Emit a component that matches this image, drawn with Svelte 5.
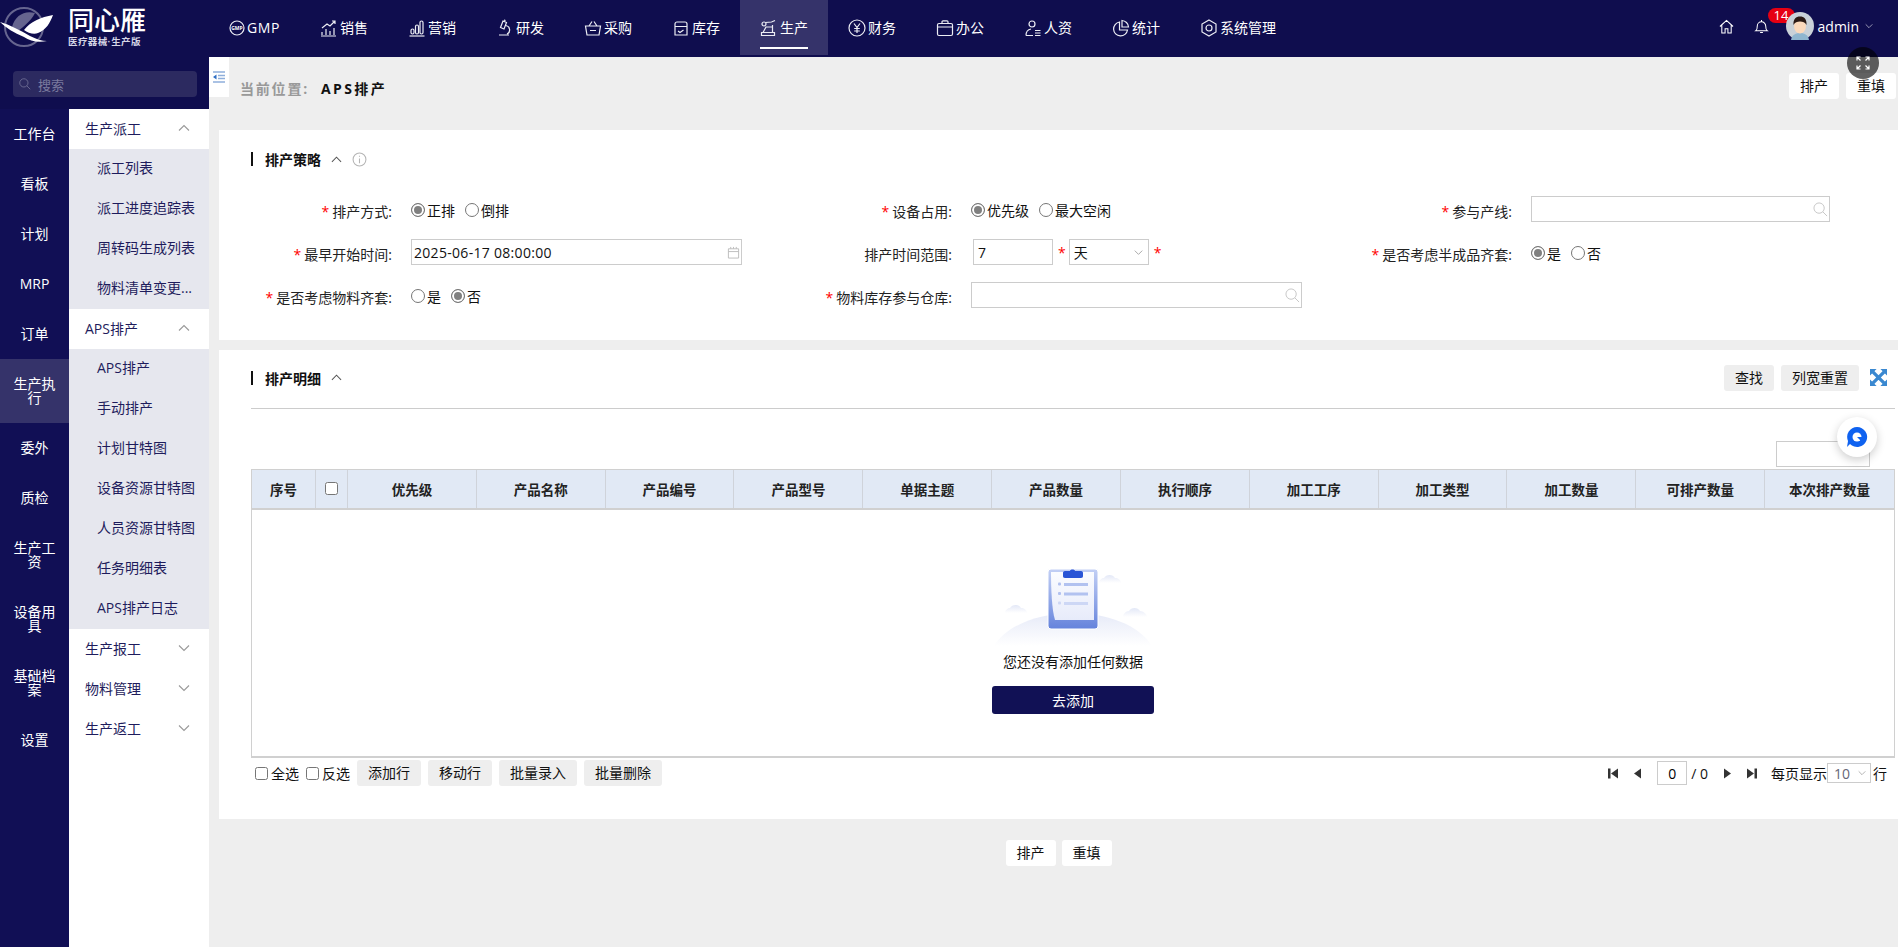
<script>
  const navItems = [
    { key: 'gmp', label: 'GMP' },
    { key: 'sale', label: '销售' },
    { key: 'market', label: '营销' },
    { key: 'dev', label: '研发' },
    { key: 'buy', label: '采购' },
    { key: 'stock', label: '库存' },
    { key: 'prod', label: '生产', active: true },
    { key: 'money', label: '财务' },
    { key: 'office', label: '办公' },
    { key: 'hr', label: '人资' },
    { key: 'stat', label: '统计' },
    { key: 'sys', label: '系统管理' }
  ];

  const railItems = ['工作台', '看板', '计划', 'MRP', '订单', '生产执行', '委外', '质检', '生产工资', '设备用具', '基础档案', '设置'];

  const groups = [
    { title: '生产派工', open: true, items: ['派工列表', '派工进度追踪表', '周转码生成列表', '物料清单变更...'] },
    { title: 'APS排产', open: true, items: ['APS排产', '手动排产', '计划甘特图', '设备资源甘特图', '人员资源甘特图', '任务明细表', 'APS排产日志'] },
    { title: '生产报工', open: false, items: [] },
    { title: '物料管理', open: false, items: [] },
    { title: '生产返工', open: false, items: [] }
  ];

  const columns = ['优先级', '产品名称', '产品编号', '产品型号', '单据主题', '产品数量', '执行顺序', '加工工序', '加工类型', '加工数量', '可排产数量', '本次排产数量'];
</script>

{#snippet navIcon(name)}
  <svg class="nav-icon" viewBox="0 0 18 18">
    {#if name === 'gmp'}
      <circle cx="8" cy="9" r="7" />
      <text x="8" y="11" class="gmp-mark">GMP</text>
    {:else if name === 'sale'}
      <path d="M2 16v-3M6 16v-6M10 16v-4M14 16V9M1 17h15M2 9l5-4 3 2 5-5M12 2h3v3" />
    {:else if name === 'market'}
      <rect x="3" y="10" width="3" height="5" rx="1.5" /><rect x="7.5" y="6" width="3" height="9" rx="1.5" /><rect x="12" y="2" width="3" height="13" rx="1.5" /><path d="M1.5 17h15" />
    {:else if name === 'dev'}
      <path d="M7 2l3.500 1.500L8 10 4.500 8.500zM10 6.500a4.500 4.500 0 0 1 1 8.500M3 16h10M8 1l1.500 .6" />
    {:else if name === 'buy'}
      <path d="M1.500 7h15l-1.500 9H3zM5 7l3-4.500M13 7l-3-4.500M6 11.500h6" />
    {:else if name === 'stock'}
      <path d="M3 5a2 2 0 0 1 2-2h8a2 2 0 0 1 2 2v11H3zM3 7.500h12M6 12l2 1.500 3.500-2.500" />
    {:else if name === 'prod'}
      <path d="M1.500 16.500h13v-3h-13zM3 13.500l3-5.500M5.500 3.500l6-.5 3.500-1.500M5.500 8h7v5.500M12.500 8V6" /><circle cx="4" cy="5" r="2" />
    {:else if name === 'money'}
      <circle cx="9" cy="9" r="8" /><path d="M6 4.500l3 4 3-4M9 8.500v5.500M6.200 9.500h5.600M6.200 12h5.600" />
    {:else if name === 'office'}
      <rect x="1.500" y="4.500" width="15" height="12" rx="1.500" /><path d="M6 4.500V2.800a1 1 0 0 1 1-1h4a1 1 0 0 1 1 1v1.700M1.500 8h15" />
    {:else if name === 'hr'}
      <circle cx="8" cy="5" r="3" /><path d="M2 16.500c0-3.500 2-6 5-6.500M2 16.500h7M11 11.500h5.500M11 14h5.500M11 16.500h5.500" />
    {:else if name === 'stat'}
      <path d="M7.500 3a7 7 0 1 0 8 8H7.500zM10 1.500a7 7 0 0 1 6.500 6.500H10z" />
    {:else}
      <path d="M9 1l7 4v8l-7 4-7-4V5z" /><circle cx="9" cy="9" r="3" />
    {/if}
  </svg>
{/snippet}

{#snippet chevron(up, size = 11)}
  <svg class="chev" width={size} height={size} viewBox="0 0 12 12">
    <path d={up ? 'M1 8.500l5-5 5 5' : 'M1 3.500l5 5 5-5'} />
  </svg>
{/snippet}

{#snippet lens()}
  <svg class="lens" viewBox="0 0 16 16"><circle cx="6.500" cy="6.500" r="5.500" /><path d="M10.500 10.500l4.500 4.500" /></svg>
{/snippet}

{#snippet radio(label, on = false)}
  <label class="radio">
    <input type="radio" checked={on} disabled />
    <span>{label}</span>
  </label>
{/snippet}

<div class="page">
  <header class="top">
    <div class="logo">
      <svg class="bird" viewBox="0 0 56 50">
        <circle cx="24" cy="27" r="19" class="ring" />
        <path class="wing-back" d="M12 27C15 15 25 10 35 13 31 21 23 27 18 31z" />
        <path class="wing-front" d="M53 15C41 17 30 22 24 30 28 33 34 35 38 33 46 30 50 23 53 15z" />
        <path class="wing-front" d="M0 22c10 3 20 8 30 14 6 3 12 5 17 5-9 2-17 0-23-4C14 33 6 28 0 22z" />
      </svg>
      <div class="logo-text">
        <div class="logo-name">同心雁</div>
        <div class="logo-sub">医疗器械·生产版</div>
      </div>
    </div>

    <nav class="menu">
      {#each navItems as item}
        <div class="menu-item" class:active={item.active}>
          {@render navIcon(item.key)}
          <span>{item.label}</span>
        </div>
      {/each}
    </nav>

    <div class="user">
      <svg class="tool" viewBox="0 0 16 16"><path d="M1 8l7-6.500L15 8M3 6.500V15h3.500v-4.500h3V15H13V6.500" /></svg>
      <div class="bell">
        <svg class="tool" viewBox="0 0 16 16"><path d="M2 12.500c1.500-1 1.500-2.500 1.500-5a4.500 4.500 0 0 1 9 0c0 2.500 0 4 1.500 5zM6.500 14.500h3M8 1v1.500" /></svg>
        <span class="badge">14</span>
      </div>
      <svg class="avatar" viewBox="0 0 28 28">
        <circle cx="14" cy="14" r="14" fill="#c9d1d8" />
        <path d="M5 28c1-5 4-7 9-7s8 2 9 7z" fill="#8fb6cf" />
        <ellipse cx="14" cy="14" rx="6" ry="7.500" fill="#fbd9bb" />
        <path d="M7.500 13C7 7 10 4.500 14 4.500S21 7 20.500 13C19 10 17 9.500 14 9.500S9 10 7.500 13z" fill="#2b1a14" />
      </svg>
      <span class="user-name">admin</span>
      {@render chevron(false, 8)}
    </div>
  </header>

  <div class="body">
    <aside class="side">
      <div class="search-wrap">
        <div class="search">
          {@render lens()}
          <span>搜索</span>
        </div>
      </div>
      <div class="side-body">
        <div class="rail">
          {#each railItems as item}
            <div class="rail-item" class:active={item === '生产执行'}>{item}</div>
          {/each}
        </div>
        <div class="sub">
          {#each groups as group}
            <div class="sub-head">
              <span>{group.title}</span>
              {@render chevron(group.open, 12)}
            </div>
            {#if group.items.length}
              <div class="sub-list">
                {#each group.items as item}
                  <div class="sub-item">{item}</div>
                {/each}
              </div>
            {/if}
          {/each}
        </div>
      </div>
    </aside>

    <main class="main">
      <div class="crumb">
        <div class="toggle">
          <svg viewBox="0 0 12 12" width="12" height="12">
            <path d="M0 1h12M5 4.500h7M5 7.500h7M0 11h12" class="toggle-lines" />
            <path d="M0 6l3.500-2.500v5z" class="toggle-arrow" />
          </svg>
        </div>
        <div class="crumb-text"><span class="crumb-label">当前位置:</span><b>APS排产</b></div>
        <div class="crumb-actions">
          <button class="btn white">排产</button>
          <button class="btn white">重填</button>
        </div>
      </div>

      <section class="card strategy">
        <div class="card-title">
          <h3>排产策略</h3>
          {@render chevron(true, 11)}
          <svg class="info" viewBox="0 0 14 14"><circle cx="7" cy="7" r="6" /><path d="M7 6v4.500M7 3.500v1" /></svg>
        </div>
        <div class="form">
          <div class="field-row">
            <div class="label"><i>*</i>排产方式:</div>
            <div class="radios">{@render radio('正排', true)}{@render radio('倒排')}</div>
          </div>
          <div class="field-row">
            <div class="label"><i>*</i>设备占用:</div>
            <div class="radios">{@render radio('优先级', true)}{@render radio('最大空闲')}</div>
          </div>
          <div class="field-row">
            <div class="label"><i>*</i>参与产线:</div>
            <div class="box wide-3"><input />{@render lens()}</div>
          </div>

          <div class="field-row">
            <div class="label"><i>*</i>最早开始时间:</div>
            <div class="box wide"><input class="date" value="2025-06-17 08:00:00" />
              <svg class="cal" viewBox="0 0 14 14"><path d="M1.500 3h11v10h-11zM1.500 6h11M4 1v2M7 1v2M10 1v2" /></svg>
            </div>
          </div>
          <div class="field-row">
            <div class="label">排产时间范围:</div>
            <div class="range">
              <div class="box num"><input value="7" /></div>
              <i>*</i>
              <div class="box unit"><span>天</span>{@render chevron(false, 9)}</div>
              <i>*</i>
            </div>
          </div>
          <div class="field-row">
            <div class="label"><i>*</i>是否考虑半成品齐套:</div>
            <div class="radios">{@render radio('是', true)}{@render radio('否')}</div>
          </div>

          <div class="field-row">
            <div class="label"><i>*</i>是否考虑物料齐套:</div>
            <div class="radios">{@render radio('是')}{@render radio('否', true)}</div>
          </div>
          <div class="field-row">
            <div class="label"><i>*</i>物料库存参与仓库:</div>
            <div class="box wide"><input />{@render lens()}</div>
          </div>
        </div>
      </section>

      <section class="card detail">
        <div class="detail-head">
          <div class="card-title flat">
            <h3>排产明细</h3>
            {@render chevron(true, 11)}
          </div>
          <div class="detail-actions">
            <button class="btn grey">查找</button>
            <button class="btn grey">列宽重置</button>
            <svg class="expand" viewBox="0 0 18 18"><path class="expand-x" d="M3 3l12 12M15 3L3 15" /><path d="M0 0h7L0 7zM18 0v7l-7-7zM0 18v-7l7 7zM18 18h-7l7-7z" /></svg>
          </div>
        </div>

        <div class="mini-row"><input class="mini" /></div>

        <div class="grid">
          <div class="grid-head">
            <div class="cell">序号</div>
            <div class="cell"><input type="checkbox" /></div>
            {#each columns as col}
              <div class="cell">{col}</div>
            {/each}
          </div>
          <div class="empty">
            <svg class="empty-art" viewBox="0 0 160 90">
              <defs>
                <linearGradient id="hill" x1="0" y1="0" x2="0" y2="1">
                  <stop offset="0" stop-color="#e6eaf8" /><stop offset="1" stop-color="#ffffff" />
                </linearGradient>
                <linearGradient id="cloud" x1="0" y1="0" x2="0" y2="1">
                  <stop offset="0" stop-color="#e3e8f7" /><stop offset="1" stop-color="#ffffff" />
                </linearGradient>
                <linearGradient id="sheet" x1="0" y1="0" x2="0" y2="1">
                  <stop offset="0" stop-color="#fbfcff" /><stop offset="1" stop-color="#e7ebfa" />
                </linearGradient>
                <linearGradient id="board" x1="0" y1="0" x2="0" y2="1">
                  <stop offset="0" stop-color="#c3d0f5" /><stop offset="1" stop-color="#6583dc" />
                </linearGradient>
              </defs>
              <path d="M1 87C14 66 46 54 80 54s66 12 79 33z" fill="url(#hill)" />
              <path d="M12 54c0-3 3-5 5-5 2-4 9-4 11 0 3 0 6 2 6 5z" fill="url(#cloud)" />
              <path d="M106 24c0-3 3-5 5-5 2-4 9-4 11 0 3 0 6 2 6 5z" fill="url(#cloud)" />
              <path d="M130 58c0-3 3-6 6-6 2-4 9-4 11 0 3 0 7 3 7 6z" fill="url(#cloud)" />
              <rect x="55" y="10" width="50" height="60" rx="3" fill="url(#board)" stroke="#fff" stroke-width="1" />
              <path d="M58 13h43v48H62c-3-9-4-30-4-48z" fill="url(#sheet)" />
              <path d="M70 14c0-1 .5-2 2-2h5c0-2 5-2 5 0h6c1.500 0 2 1 2 2v3c0 1-.5 2-2 2H72c-1.500 0-2-1-2-2z" fill="#2a55d6" />
              <g fill="#b2c2f0">
                <rect x="65" y="23.500" width="3" height="3" rx="1" /><rect x="71" y="24" width="24" height="3" />
                <rect x="65" y="33" width="3" height="3" rx="1" /><rect x="71" y="33.500" width="24" height="3" />
              </g>
              <g fill="#cdd7f5">
                <rect x="65" y="42.500" width="3" height="3" rx="1" /><rect x="71" y="43" width="24" height="3" />
              </g>
            </svg>
            <p>您还没有添加任何数据</p>
            <button class="btn-add">去添加</button>
          </div>
        </div>

        <div class="grid-foot">
          <div class="foot-left">
            <label class="check"><input type="checkbox" />全选</label>
            <label class="check"><input type="checkbox" />反选</label>
            <button class="btn grey">添加行</button>
            <button class="btn grey">移动行</button>
            <button class="btn grey">批量录入</button>
            <button class="btn grey">批量删除</button>
          </div>
          <div class="pager">
            <svg class="pg" viewBox="0 0 10 10"><path d="M0 0h2.500v10H0zM10 0v10L3 5z" /></svg>
            <svg class="pg narrow" viewBox="0 0 7 10"><path d="M7 0v10L0 5z" /></svg>
            <input class="pg-input" value="0" />
            <span class="pg-total">/ 0</span>
            <svg class="pg narrow" viewBox="0 0 7 10"><path d="M0 0v10l7-5z" /></svg>
            <svg class="pg" viewBox="0 0 10 10"><path d="M0 0l7 5-7 5zM7.500 0H10v10H7.500z" /></svg>
            <span class="pg-label">每页显示</span>
            <div class="pg-size"><span>10</span>{@render chevron(false, 8)}</div>
            <span class="pg-unit">行</span>
          </div>
        </div>
      </section>

      <div class="bottom-actions">
        <button class="btn white">排产</button>
        <button class="btn white">重填</button>
      </div>

      <div class="screen-btn">
        <svg viewBox="0 0 14 14" width="14" height="14"><path d="M1 4.500V1h3.500M9.500 1H13v3.500M13 9.500V13H9.500M4.500 13H1V9.500M1 1l3.500 3.500M13 1L9.500 4.500M13 13L9.500 9.500M1 13l3.500-3.500" /></svg>
      </div>
      <div class="chat-btn">
        <svg viewBox="0 0 22 22" width="22" height="22"><path d="M11 1a10 10 0 1 1-7 17l-3 3 1-6A10 10 0 0 1 11 1z" fill="#0f62f0" /><circle cx="11" cy="11" r="4.500" fill="#fff" /><path d="M11 11h6v6z" fill="#0f62f0" /></svg>
      </div>
    </main>
  </div>
</div>

<style>
  :global(body) {
    margin: 0;
    font-family: "Open Sans", "Noto Sans CJK SC", sans-serif;
    font-size: 14px;
    color: #111;
    background: #eee;
  }

  .page {
    width: 1898px;
    height: 947px;
    overflow: hidden;
  }

  /* top bar */
  .top {
    display: flex;
    height: 57px;
    background: #0f0d4e;
    color: #fff;
  }

  .logo {
    display: flex;
    width: 209px;
    flex: none;
  }

  .bird {
    width: 56px;
    height: 50px;
    flex: none;
  }

  .ring {
    fill: none;
    stroke: #66658f;
    stroke-width: 2;
  }

  .wing-back {
    fill: #66658f;
  }

  .wing-front {
    fill: #fff;
  }

  .logo-text {
    margin: 7px 0 0 12px;
    width: 82px;
    font-family: "Liberation Sans", "Noto Sans CJK SC", sans-serif;
  }

  .logo-name {
    font-size: 26px;
    line-height: 29px;
    font-weight: 500;
    white-space: nowrap;
  }

  .logo-sub {
    font-size: 9.500px;
    line-height: 12px;
    font-weight: 700;
    color: #d6d6e6;
    letter-spacing: .4px;
    white-space: nowrap;
  }

  .menu {
    display: flex;
    height: 55px;
  }

  .menu-item {
    position: relative;
    display: flex;
    align-items: center;
    gap: 2px;
    padding: 0 20px;
    line-height: 55px;
    white-space: nowrap;
  }

  .menu-item:first-child {
    gap: 0;
  }

  .menu-item:first-child span {
    letter-spacing: .6px;
  }

  .menu-item.active {
    background: #35336a;
  }

  .menu-item.active::after {
    content: '';
    position: absolute;
    left: 20px;
    right: 20px;
    top: 47px;
    height: 2px;
    background: #fff;
  }

  .nav-icon {
    width: 18px;
    height: 18px;
    flex: none;
    fill: none;
    stroke: #ecedf4;
    stroke-width: 1.2;
  }

  .gmp-mark {
    font-size: 5px;
    font-weight: 700;
    text-anchor: middle;
    fill: #fff;
    stroke: none;
  }

  .user {
    display: flex;
    align-items: center;
    margin-left: auto;
    padding: 0 25px 5px 0;
  }

  .tool {
    width: 15px;
    height: 15px;
    fill: none;
    stroke: #fff;
    stroke-width: 1.1;
    display: block;
  }

  .bell {
    position: relative;
    margin-left: 20px;
  }

  .badge {
    position: absolute;
    left: 14px;
    top: -11px;
    width: 27px;
    height: 15px;
    border-radius: 8px;
    background: #e60012;
    font-size: 13px;
    line-height: 15px;
    padding-left: 6px;
    box-sizing: border-box;
  }

  .avatar {
    position: relative;
    width: 28px;
    height: 28px;
    margin-left: 17px;
    flex: none;
  }

  .user-name {
    margin-left: 4px;
  }

  .chev {
    flex: none;
    fill: none;
    stroke: #999;
    stroke-width: 1.1;
  }

  .user .chev {
    margin-left: 6px;
    stroke: #c9c9d8;
  }

  /* sidebar */
  .body {
    display: flex;
    height: 890px;
  }

  .side {
    width: 209px;
    flex: none;
    display: flex;
    flex-direction: column;
  }

  .search-wrap {
    height: 52px;
    box-sizing: border-box;
    padding: 14px 12px 0 13px;
    background: #0f0d4e;
  }

  .search {
    display: flex;
    align-items: center;
    gap: 7px;
    height: 26px;
    padding-left: 6px;
    border-radius: 4px;
    background: #2c2a60;
    color: #7a7a9e;
    font-size: 13px;
  }

  .lens {
    width: 15px;
    height: 15px;
    flex: none;
    fill: none;
    stroke: #c4c4c4;
    stroke-width: 1;
  }

  .search .lens {
    width: 12px;
    height: 12px;
    stroke: #7a7a9e;
  }

  .side-body {
    display: flex;
    flex: 1;
  }

  .rail {
    width: 69px;
    flex: none;
    background: #110f55;
    color: #fff;
  }

  .rail-item {
    padding: 18px 10px;
    line-height: 14px;
    text-align: center;
  }

  .rail-item.active {
    background: #35336a;
  }

  .sub {
    flex: 1;
    background: #fff;
    color: #1e1c5c;
  }

  .sub-head {
    display: flex;
    align-items: center;
    justify-content: space-between;
    height: 40px;
    box-sizing: border-box;
    padding: 0 19px 2px 16px;
  }

  .sub-list {
    background: #e6e7ee;
  }

  .sub-item {
    height: 40px;
    line-height: 38px;
    padding-left: 28px;
    white-space: nowrap;
  }

  /* main */
  .main {
    position: relative;
    flex: 1;
    min-width: 0;
    background: #eee;
  }

  .crumb {
    display: flex;
    height: 73px;
  }

  .toggle {
    width: 20px;
    height: 40px;
    flex: none;
    background: #fff;
    display: flex;
    align-items: center;
    justify-content: center;
  }

  .toggle-lines {
    fill: none;
    stroke: #8eaedb;
    stroke-width: 1.4;
  }

  .toggle-arrow {
    fill: #2f6fc4;
  }

  .crumb-text {
    margin: 22px 0 0 11px;
    line-height: 20px;
    letter-spacing: 1.8px;
  }

  .crumb-label {
    color: #999;
    font-weight: 700;
    margin-right: 12px;
  }

  .crumb-text b {
    letter-spacing: 2.4px;
  }

  .crumb-actions {
    display: flex;
    gap: 7px;
    margin: 16px 2px 0 auto;
  }

  .btn {
    height: 26px;
    padding: 0 11px;
    border: 0;
    border-radius: 3px;
    font: inherit;
    line-height: 26px;
    color: #111;
  }

  .btn.white {
    width: 50px;
    padding: 0;
    background: #fff;
  }

  .btn.grey {
    background: #eee;
  }

  .card {
    margin-left: 10px;
    background: #fff;
    box-sizing: border-box;
    padding-left: 32px;
  }

  .strategy {
    height: 210px;
    padding-top: 22px;
    margin-bottom: 10px;
  }

  .card-title {
    display: flex;
    align-items: center;
    height: 14px;
    border-left: 2px solid #111;
    padding-left: 12px;
  }

  .card-title .chev {
    margin-left: 10px;
    stroke: #555;
  }

  .card-title h3 {
    margin: 0;
    font-size: 14px;
    font-weight: 700;
  }

  .info {
    width: 15px;
    height: 15px;
    margin-left: 10px;
    fill: none;
    stroke: #b5b5b5;
  }

  .form {
    display: grid;
    grid-template-columns: repeat(3, 560px);
    grid-auto-rows: 26px;
    row-gap: 17px;
    margin-top: 30px;
  }

  .field-row {
    display: flex;
    align-items: center;
  }

  .label {
    width: 141px;
    margin-right: 19px;
    flex: none;
    text-align: right;
    white-space: nowrap;
    padding-top: 4px;
    color: #222;
  }

  i {
    font-style: normal;
    color: #f00;
    margin-right: 3px;
  }

  .radios {
    display: flex;
    gap: 10px;
    padding-top: 1px;
  }

  .radio {
    display: flex;
    align-items: center;
    gap: 2px;
  }

  .radio input {
    appearance: none;
    width: 14px;
    height: 14px;
    margin: 0;
    box-sizing: border-box;
    border: 1px solid #767676;
    border-radius: 50%;
    background: #fff;
  }

  .radio input:checked {
    background: #808080;
    box-shadow: inset 0 0 0 2px #fff;
  }

  .box {
    display: flex;
    align-items: center;
    height: 26px;
    box-sizing: border-box;
    border: 1px solid #ccc;
    background: #fff;
    padding: 0 1px 0 2px;
  }

  .box input {
    flex: 1;
    min-width: 0;
    height: 22px;
    padding: 0;
    border: 0;
    outline: 0;
    font: inherit;
    color: #111;
  }

  .box input.date {
    letter-spacing: .3px;
  }

  .wide {
    width: 331px;
  }

  .wide-3 {
    width: 299px;
  }

  .cal {
    width: 13px;
    height: 13px;
    fill: none;
    stroke: #bbb;
  }

  .range {
    display: flex;
    align-items: center;
  }

  .range i {
    margin: 0 0 0 5px;
  }

  .box.num {
    width: 80px;
    padding-left: 4px;
    margin-left: 2px;
  }

  .box.unit {
    width: 80px;
    margin-left: 3px;
    padding: 0 5px 0 4px;
    justify-content: space-between;
  }

  .detail {
    height: 469px;
    padding-right: 3px;
  }

  .detail-head {
    display: flex;
    align-items: center;
    justify-content: space-between;
    height: 59px;
    border-bottom: 1px solid #ccc;
    box-sizing: border-box;
  }

  .detail-actions {
    display: flex;
    align-items: center;
    gap: 7px;
    padding-right: 8px;
    margin-top: -3px;
  }

  .card-title.flat {
    margin-top: -3px;
  }

  .expand {
    width: 17px;
    height: 17px;
    margin-left: 4px;
    fill: #3a88d0;
  }

  .expand-x {
    fill: none;
    stroke: #3a88d0;
    stroke-width: 3.5;
  }

  .mini-row {
    display: flex;
    justify-content: flex-end;
    padding: 32px 25px 2px 0;
  }

  .mini {
    width: 94px;
    height: 26px;
    box-sizing: border-box;
    padding: 0;
    border: 1px solid #ccc;
    outline: 0;
  }

  .grid {
    height: 289px;
    box-sizing: border-box;
    border: 1px solid #d0d0d0;
    border-bottom-width: 2px;
    display: flex;
    flex-direction: column;
  }

  .grid-head {
    display: grid;
    grid-template-columns: 64px 32px repeat(12, 1fr);
    height: 40px;
    flex: none;
    box-sizing: border-box;
    background: #e1e9f5;
    border-bottom: 2px solid #d0d0d0;
  }

  .cell {
    display: flex;
    align-items: center;
    justify-content: center;
    border-right: 1px solid #cfd3da;
    font-weight: 700;
    color: #222;
    font-size: 13.500px;
    white-space: nowrap;
  }

  .cell:last-child {
    border-right: 0;
  }

  .cell input {
    margin: 0 0 2px;
  }

  .empty {
    flex: 1;
    display: flex;
    flex-direction: column;
    align-items: center;
    padding-top: 49px;
  }

  .empty-art {
    width: 160px;
    height: 90px;
    display: block;
    flex: none;
  }

  .empty p {
    margin: 3px 0 0;
    line-height: 20px;
  }

  .btn-add {
    width: 162px;
    height: 28px;
    margin-top: 14px;
    border: 0;
    border-radius: 3px;
    background: #111155;
    color: #fff;
    font: inherit;
  }

  .grid-foot {
    display: flex;
    justify-content: space-between;
    align-items: flex-start;
    padding: 2px 8px 0 4px;
  }

  .foot-left {
    display: flex;
    align-items: center;
  }

  .check {
    display: flex;
    align-items: center;
    gap: 3px;
    margin-right: 7px;
  }

  .check input {
    margin: 0;
  }

  .foot-left .btn {
    margin-right: 7px;
  }

  .pager {
    display: flex;
    align-items: center;
    height: 26px;
    color: #111;
  }

  .pg {
    width: 10px;
    height: 11px;
    fill: #333;
    flex: none;
  }

  .pg.narrow {
    width: 7px;
  }

  .pager > .pg:first-child {
    margin-right: 16px;
  }

  .pg-input {
    width: 30px;
    height: 24px;
    margin: 0 4px 0 16px;
    padding: 0;
    box-sizing: border-box;
    border: 1px solid #ccc;
    outline: 0;
    text-align: center;
    font: inherit;
  }

  .pg-total {
    margin-right: 16px;
  }

  .pager .pg.narrow + .pg {
    margin-left: 16px;
  }

  .pg-label {
    margin-left: 14px;
    white-space: nowrap;
  }

  .pg-size {
    display: flex;
    align-items: center;
    justify-content: space-between;
    width: 44px;
    height: 20px;
    box-sizing: border-box;
    padding: 0 4px 0 6px;
    border: 1px solid #ccc;
    color: #667;
  }

  .pg-unit {
    margin-left: 2px;
  }

  .bottom-actions {
    display: flex;
    justify-content: center;
    gap: 6px;
    margin: 21px 0 0 10px;
  }

  .screen-btn {
    position: absolute;
    left: 1638px;
    top: -10px;
    width: 32px;
    height: 32px;
    border-radius: 50%;
    background: rgba(0, 0, 0, .62);
    display: flex;
    align-items: center;
    justify-content: center;
  }

  .screen-btn path {
    fill: none;
    stroke: #fff;
    stroke-width: 1.2;
  }

  .chat-btn {
    position: absolute;
    left: 1628px;
    top: 360px;
    width: 40px;
    height: 40px;
    border-radius: 50%;
    background: #fff;
    box-shadow: 0 3px 10px rgba(0, 0, 0, .2);
    display: flex;
    align-items: center;
    justify-content: center;
  }
</style>
